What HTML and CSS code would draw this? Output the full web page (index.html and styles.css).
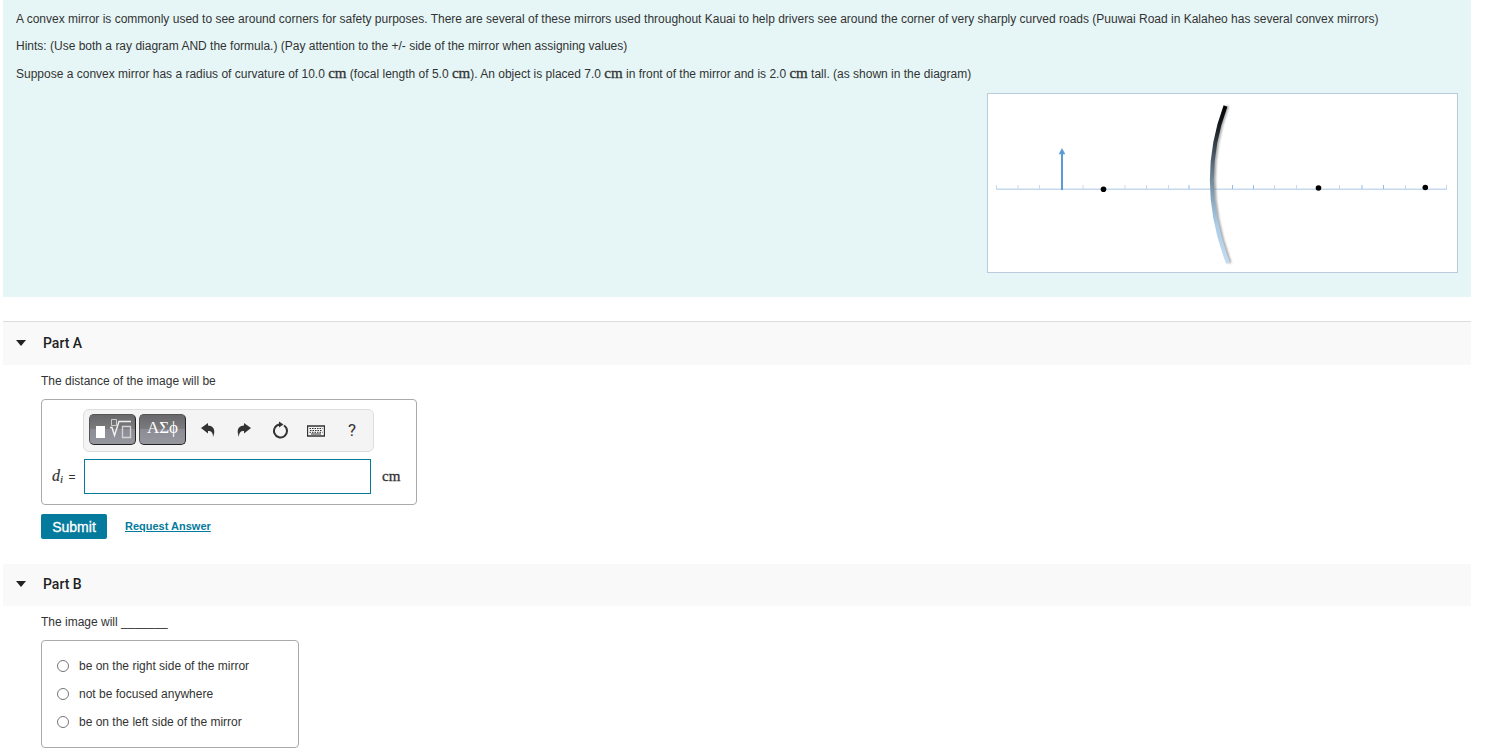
FILE: index.html
```html
<!DOCTYPE html>
<html lang="en">
<head>
    <meta charset="UTF-8">
    <title>Convex mirror</title>
    <link rel="stylesheet" href="styles.css">
</head>
<body>
<div id="intro">
    <p>A convex mirror is commonly used to see around corners for safety purposes. There are several of these mirrors used throughout Kauai to help drivers see around the corner of very sharply curved roads (Puuwai Road in Kalaheo has several convex mirrors)</p>
    <p>Hints: (Use both a ray diagram AND the formula.) (Pay attention to the +/- side of the mirror when assigning values)</p>
    <p>Suppose a convex mirror has a radius of curvature of 10.0 <span class="unit">cm</span> (focal length of 5.0 <span class="unit">cm</span>). An object is placed 7.0 <span class="unit">cm</span> in front of the mirror and is 2.0 <span class="unit">cm</span> tall. (as shown in the diagram)</p>
    <div class="figure">
        <svg width="469" height="178" viewBox="0 0 469 178" role="img" aria-label="Convex mirror diagram">
            <defs>
                <linearGradient id="glass" gradientUnits="userSpaceOnUse" x1="0" y1="12" x2="0" y2="169">
                    <stop offset="0" stop-color="#000"/>
                    <stop offset="0.15" stop-color="#1c2228"/>
                    <stop offset="0.45" stop-color="#6d8496"/>
                    <stop offset="0.75" stop-color="#a9cbe8"/>
                    <stop offset="1" stop-color="#c4dcf2"/>
                </linearGradient>
                <filter id="soft" x="-50%" y="-10%" width="200%" height="120%"><feGaussianBlur stdDeviation="0.8"/></filter>
            </defs>
            <path d="M8 95.2H459" stroke="#c5daee" stroke-width="1.6"/>
            <path d="M8.5 91v4M30 91v4M51.5 91v4M95 91v4M137 91v4M158.5 91v4M180.5 91v4M286.5 91v4M308.5 91v4M351.5 91v4M417.5 91v4M458.5 91v4" stroke="#c5daee"/>
            <path d="M201 91v4M244.5 91v4M265.5 91v4M374 91v4M395.5 91v4" stroke="#8fbce6"/>
            <path d="M74 96V59" stroke="#5b9bd5" stroke-width="2"/>
            <path d="M74 54l3.3 6.3h-6.6z" fill="#5b9bd5"/>
            <path d="M239.5 12Q211.5 88 242 169" fill="none" stroke="#777" stroke-width="3" opacity="0.7" filter="url(#soft)"/>
            <path d="M237.5 12Q209 88 240 169" fill="none" stroke="url(#glass)" stroke-width="4"/>
            <circle cx="115.5" cy="95.3" r="2.8"/>
            <circle cx="330.5" cy="94" r="2.8"/>
            <circle cx="437.3" cy="93.5" r="2.8"/>
        </svg>
    </div>
</div>

<div class="part first">
    <h2><span class="arrow"></span>Part A</h2>
    <div class="content">
        <p>The distance of the image will be</p>
        <div class="answer">
            <div class="tools">
                <button type="button" class="dark" aria-label="Templates">
                    <svg width="45" height="29" viewBox="0 0 45 29" fill="none">
                        <rect x="6" y="11" width="9" height="12" fill="#fff"/>
                        <path d="M21.5 4.5h5v6h-5z" stroke="#ccc"/>
                        <path d="M20 12.500h2l2.500 8L29 6.500h12" stroke="#f2f2f2" stroke-width="1.400"/>
                        <path d="M32.5 11.5h8v11h-8z" stroke="#d4d4d8" stroke-width="1.3"/>
                    </svg>
                </button>
                <button type="button" class="dark">ΑΣϕ</button>
                <button type="button" class="icon" aria-label="Undo">
                    <svg width="14" height="14" viewBox="0 0 14 14"><path d="M0 5L7 0v2.600c5.500.2 8 4.400 5 11.400.1-4-1.200-6-5-6V10.500z" fill="#333"/></svg>
                </button>
                <button type="button" class="icon" aria-label="Redo">
                    <svg width="14" height="14" viewBox="0 0 14 14"><path d="M14 5L7 0v2.600C1.500 2.800-1 7 2 14c-.1-4 1.200-6 5-6V10.500z" fill="#333"/></svg>
                </button>
                <button type="button" class="icon" aria-label="Reset">
                    <svg width="18" height="18" viewBox="0 0 18 18"><path d="M13 4.500A6.500 6.500 0 1 1 9 3.500" fill="none" stroke="#333" stroke-width="2"/><path d="M8 .5L12.500 3.600 8 6.500z" fill="#333"/></svg>
                </button>
                <button type="button" class="icon keys" aria-label="Keyboard">
                    <svg width="18" height="12" viewBox="0 0 18 12" fill="none" stroke="#333"><path d="M.5 1h17v10H.5z" stroke-width="1.3"/><path d="M2.500 3.500h13M3 5.500h12M2.500 7.300h13" stroke-dasharray="1.500 1"/><path d="M4 9h10"/></svg>
                </button>
                <button type="button" class="icon" aria-label="Help">?</button>
            </div>
            <div class="row">
                <label for="distance"><i>d<sub>i</sub></i> =</label>
                <input type="text" id="distance">
                <span class="unit">cm</span>
            </div>
        </div>
        <div class="actions">
            <button type="submit" class="submit">Submit</button>
            <a href="#">Request Answer</a>
        </div>
    </div>
</div>

<div class="part">
    <h2><span class="arrow"></span>Part B</h2>
    <div class="content">
        <p>The image will _______</p>
        <div class="choices">
            <label><input type="radio" name="side">be on the right side of the mirror</label>
            <label><input type="radio" name="side">not be focused anywhere</label>
            <label><input type="radio" name="side">be on the left side of the mirror</label>
        </div>
    </div>
</div>
</body>
</html>
```

FILE: styles.css
```css
* {
    margin: 0;
    padding: 0;
    box-sizing: border-box;
}
body{
    padding: 0 14px 0 3px;
    background: #fff;
    color: #333;
    font: 12px/15px "Liberation Sans", Arial, sans-serif;
}
.unit{
    font-family: "Liberation Serif", "Times New Roman", serif;
    font-size: 15px;
    line-height: 1;
    -webkit-text-stroke: 0.3px;
}
#intro{
    padding: 12px 13px 24px;
    background: #e6f6f7;
}
#intro p{
    height: 15px;
    margin-bottom: 12px;
}
.figure{
    width: fit-content;
    margin-left: auto;
    border: 1px solid #b9cbdd;
    background: #fff;
}
.figure svg{
    display: block;
}

.part{
    margin-bottom: 25px;
}
.part.first{
    margin-top: 24px;
}
.part h2{
    display: flex;
    align-items: center;
    height: 42px;
    padding: 0 0 2px 13px;
    background: #f9f9f9;
    color: #222;
    font: 500 14px/20px Roboto, Arial, sans-serif;
}
.part.first h2{
    height: 44px;
    border-top: 1px solid #ddd;
}
.arrow{
    width: 10px;
    margin-right: 17px;
    border: 5px solid transparent;
    border-top: 6px solid #222;
    border-bottom: 0;
}
.content{
    padding: 9px 0 0 38px;
}
.content p{
    margin-bottom: 10px;
}

.answer{
    width: 376px;
    height: 106px;
    padding: 9px 10px;
    border: 1px solid #aaa;
    border-radius: 4px;
}
.tools{
    display: flex;
    align-items: center;
    width: 291px;
    height: 43px;
    margin-left: 31px;
    padding: 0 0 2px 5px;
    border: 1px solid #ddd;
    border-radius: 6px;
    background: #f4f4f4;
}
.tools button{
    display: flex;
    align-items: center;
    justify-content: center;
    cursor: pointer;
}
.dark{
    width: 47px;
    height: 31px;
    margin-right: 3px;
    border: 1px solid #555;
    border-right-color: #222;
    border-bottom-color: #222;
    border-radius: 5px;
    background: linear-gradient(#69696b, #7c7c7e 50%, #8c8c95 50%, #96969e);
    color: #fff;
    font: 17px/20px "Liberation Serif", "Times New Roman", serif;
}
.tools .dark + .dark{
    padding-bottom: 4px;
}
.icon{
    width: 36px;
    height: 31px;
    padding-left: 2px;
    border: 0;
    background: none;
    color: #333;
    font: 17px/20px Roboto, Arial, sans-serif;
}
.tools .keys{
    padding-top: 3px;
}
.row{
    display: flex;
    align-items: center;
    margin-top: 7px;
}
.row label{
    width: 32px;
}
.row i{
    font: italic 16px/16px "Liberation Serif", "Times New Roman", serif;
    -webkit-text-stroke: 0.2px;
}
.row sub{
    margin-right: 2px;
    font-size: 11px;
    line-height: 1;
    vertical-align: -2px;
}
.row input{
    width: 287px;
    height: 35px;
    margin-right: 11px;
    padding: 0 8px;
    border: 1px solid #047a9c;
    outline: 0;
}
.actions{
    display: flex;
    align-items: center;
    margin-top: 9px;
}
.submit{
    width: 66px;
    height: 25px;
    margin-right: 18px;
    border: 0;
    border-radius: 2px;
    background: #047a9c;
    color: #fff;
    font: 500 14px/20px "Liberation Sans", Arial, sans-serif;
    -webkit-text-stroke: 0.3px;
    cursor: pointer;
}
.actions a{
    color: #047a9c;
    font-size: 11px;
    font-weight: bold;
}

.choices{
    width: 258px;
    padding: 11px 15px;
    border: 1px solid #aaa;
    border-radius: 4px;
}
.choices label{
    display: flex;
    align-items: center;
    height: 28px;
}
.choices input{
    appearance: none;
    width: 12px;
    height: 12px;
    margin-right: 10px;
    border: 1px solid #767676;
    border-radius: 50%;
}
```
